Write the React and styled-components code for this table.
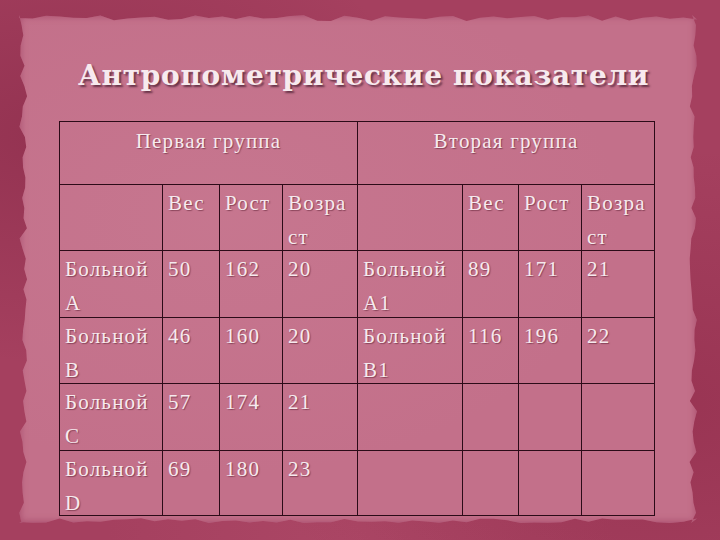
import React from "react";
import styled, { createGlobalStyle } from "styled-components";

const GlobalStyle = createGlobalStyle`
  html, body { margin: 0; padding: 0; }
  body { width: 720px; height: 540px; overflow: hidden; background: #a5405f; }
`;

function rag(seed) {
  let s = seed;
  return () => {
    s = (s * 9301 + 49297) % 233280;
    return s / 233280;
  };
}

const r = rag(7);
const pts = [];
for (let x = 0; x <= 100; x += 2) pts.push(`${x}% ${(r() * 1.2).toFixed(2)}%`);
for (let y = 0; y <= 100; y += 2) pts.push(`${(100 - r() * 1.1).toFixed(2)}% ${y}%`);
for (let x = 100; x >= 0; x -= 2) pts.push(`${x}% ${(100 - r() * 1.0).toFixed(2)}%`);
for (let y = 100; y >= 0; y -= 2) pts.push(`${(r() * 1.2).toFixed(2)}% ${y}%`);
const paperClip = `polygon(${pts.join(", ")})`;

const Page = styled.div`
  width: 720px;
  height: 540px;
  box-sizing: border-box;
  padding: 15px 23px 17px 19px;
  display: flex;
  background:
    radial-gradient(ellipse at 8% 25%, rgba(115, 25, 55, 0.35), transparent 40%),
    radial-gradient(ellipse at 92% 75%, rgba(125, 25, 55, 0.3), transparent 45%),
    radial-gradient(ellipse at 50% 100%, rgba(190, 90, 120, 0.25), transparent 50%),
    #a5405f;
`;

const Paper = styled.div`
  flex: 1;
  box-sizing: border-box;
  padding: 46px 0 0 40px;
  display: flex;
  flex-direction: column;
  background:
    radial-gradient(ellipse at 30% 40%, rgba(210, 140, 160, 0.22), transparent 60%),
    #c3708a;
  box-shadow: inset 0 0 6px 2px rgba(150, 50, 85, 0.5);
  clip-path: ${paperClip};
`;

const Title = styled.h1`
  margin: 0 0 30px 19px;
  font-family: "DejaVu Serif", serif;
  font-weight: bold;
  font-size: 28px;
  line-height: 30px;
  letter-spacing: 0.7px;
  color: #f7eaee;
  text-shadow: 2px 2px 2px rgba(80, 35, 55, 0.8);
`;

const Table = styled.table`
  border-collapse: collapse;
  table-layout: fixed;
  width: 596px;
  font-family: "Liberation Serif", "Times New Roman", serif;
  font-size: 21px;
  line-height: 34px;
  letter-spacing: 1.2px;
  color: #f6eaee;
  text-shadow: 1px 1px 1px rgba(90, 30, 50, 0.55);
`;

const Cell = styled.td`
  border: 1px solid #2c0b18;
  padding: ${(p) => (p.$group ? "2px 6px 0" : "1px 2px 0 5px")};
  height: ${(p) => p.$h}px;
  box-sizing: border-box;
  vertical-align: top;
  text-align: ${(p) => (p.$group ? "center" : "left")};
  white-space: nowrap;
`;

const CellText = styled.div`
  height: 0;
  overflow: visible;
`;

const widths = [103, 57, 63, 75, 105, 56, 63, 73];
const rowHeights = [67, 66, 67, 65];

const rows = [
  [["Больной", "A"], "50", "162", "20", ["Больной", "A1"], "89", "171", "21"],
  [["Больной", "B"], "46", "160", "20", ["Больной", "B1"], "116", "196", "22"],
  [["Больной", "C"], "57", "174", "21", "", "", "", ""],
  [["Больной", "D"], "69", "180", "23", "", "", "", ""],
];

const sub = ["", "Вес", "Рост", ["Возра", "ст"], "", "Вес", "Рост", ["Возра", "ст"]];

function Content({ v }) {
  if (Array.isArray(v)) {
    return (
      <CellText>
        {v[0]}
        <br />
        {v[1]}
      </CellText>
    );
  }
  return <CellText>{v}</CellText>;
}

export default function App() {
  return (
    <>
      <GlobalStyle />
      <Page>
        <Paper>
          <Title>Антропометрические показатели</Title>
          <Table>
            <colgroup>
              {widths.map((w, i) => (
                <col key={i} style={{ width: w }} />
              ))}
            </colgroup>
            <tbody>
              <tr>
                <Cell colSpan={4} $group $h={63}>
                  <Content v="Первая группа" />
                </Cell>
                <Cell colSpan={4} $group $h={63}>
                  <Content v="Вторая группа" />
                </Cell>
              </tr>
              <tr>
                {sub.map((v, i) => (
                  <Cell key={i} $h={66}>
                    <Content v={v} />
                  </Cell>
                ))}
              </tr>
              {rows.map((row, ri) => (
                <tr key={ri}>
                  {row.map((v, i) => (
                    <Cell key={i} $h={rowHeights[ri]}>
                      <Content v={v} />
                    </Cell>
                  ))}
                </tr>
              ))}
            </tbody>
          </Table>
        </Paper>
      </Page>
    </>
  );
}
